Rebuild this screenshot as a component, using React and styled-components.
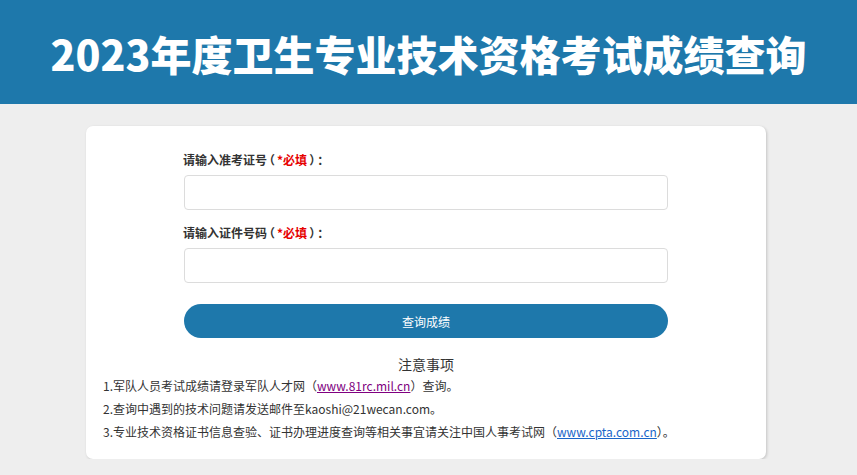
import React from 'react'
import styled, { createGlobalStyle } from 'styled-components'

const GlobalStyle = createGlobalStyle`
  html, body {
    margin: 0;
    padding: 0;
    background: #eeeeee;
    font-family: "Noto Sans CJK SC", "Noto Sans", sans-serif;
    color: #333;
  }
`

const Header = styled.header`
  height: 104px;
  background: #1e78ab;
  display: flex;
  align-items: center;
  justify-content: center;
`

const Title = styled.h1`
  margin: 0;
  color: #fff;
  font-size: 41px;
  font-weight: 900;
  line-height: 1;
  padding-top: 2px;
`

const Main = styled.main`
  padding: 22px 0 0;
  display: flex;
  justify-content: center;
`

const Card = styled.section`
  width: 680px;
  box-sizing: border-box;
  margin-left: -5px;
  background: #fff;
  border-radius: 7px;
  box-shadow: 1px 1px 3px rgba(0, 0, 0, 0.18);
  padding: 25px 17px 16px;
`

const Form = styled.form`
  width: 484px;
  margin: 0 auto;
  display: flex;
  flex-direction: column;
`

const Label = styled.label`
  font-size: 12px;
  font-weight: bold;
  color: #333;
  line-height: 18px;
  margin: 0 0 6px -1px;
`

const Paren = styled.span`
  font-feature-settings: "halt";
  margin: 0 2px;
`

const Required = styled.span`
  color: #e60000;
`

const Input = styled.input`
  height: 35px;
  box-sizing: border-box;
  border: 1px solid #dcdcdc;
  border-radius: 4px;
  margin-bottom: 14px;
  outline: none;
`

const Button = styled.button`
  margin-top: 7px;
  height: 34px;
  border: none;
  border-radius: 17px;
  background: #1e78ab;
  color: #fff;
  font-family: inherit;
  font-size: 12px;
`

const Notes = styled.div`
  margin-top: 17px;
`

const NotesTitle = styled.h2`
  margin: 0;
  text-align: center;
  font-size: 14px;
  font-weight: normal;
  line-height: 19px;
  color: #333;
`

const Note = styled.p`
  margin: 0;
  font-size: 12px;
  line-height: 23px;
  color: #333;
`

const Link = styled.a`
  color: ${(props) => (props.visited ? '#800080' : '#1a66c9')};
  text-decoration: underline;
`

const App = () => (
  <>
    <GlobalStyle />
    <Header>
      <Title>2023年度卫生专业技术资格考试成绩查询</Title>
    </Header>
    <Main>
      <Card>
        <Form onSubmit={(e) => e.preventDefault()}>
          <Label>请输入准考证号<Paren>（</Paren><Required>*必填</Required><Paren>）</Paren>：</Label>
          <Input type="text" />
          <Label>请输入证件号码<Paren>（</Paren><Required>*必填</Required><Paren>）</Paren>：</Label>
          <Input type="text" />
          <Button type="submit">查询成绩</Button>
        </Form>
        <Notes>
          <NotesTitle>注意事项</NotesTitle>
          <Note>1.军队人员考试成绩请登录军队人才网（<Link visited href="#">www.81rc.mil.cn</Link>）查询。</Note>
          <Note>2.查询中遇到的技术问题请发送邮件至kaoshi@21wecan.com。</Note>
          <Note>3.专业技术资格证书信息查验、证书办理进度查询等相关事宜请关注中国人事考试网（<Link href="#">www.cpta.com.cn</Link>）。</Note>
        </Notes>
      </Card>
    </Main>
  </>
)

export default App
